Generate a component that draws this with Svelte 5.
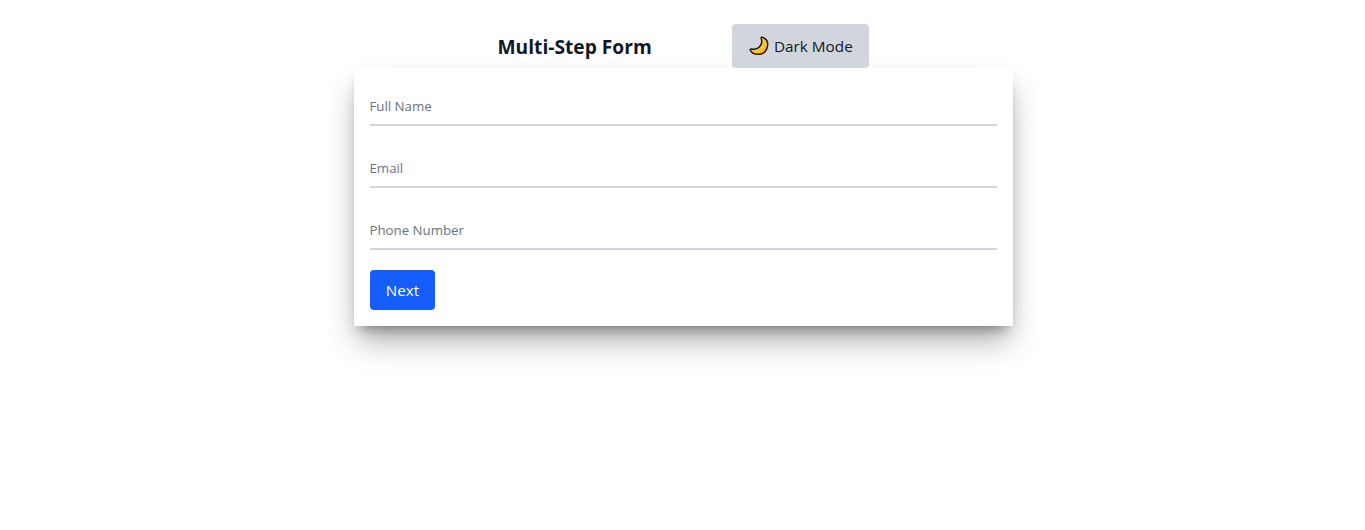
<script>
  const fields = [
    { name: 'name', label: 'Full Name', type: 'text' },
    { name: 'email', label: 'Email', type: 'email' },
    { name: 'phone', label: 'Phone Number', type: 'tel' }
  ];
</script>

<main>
  <header>
    <h1>Multi-Step Form</h1>
    <button class="mode" type="button">
      <svg width="20" height="20" viewBox="0 0 20 20" aria-hidden="true">
        <path d="M13.1 1.2C16.7 2.2 18.8 5.1 18.7 8.8C18.6 14.5 14.6 18.3 9.4 18.3C5.8 18.3 2.6 16.9 1.3 14.2C1 13.3 1.5 12.8 2.5 13C6.3 13.8 9.9 12.1 11.7 9.2C13 7 13.1 4.7 12.2 2.4C11.9 1.5 12.3 1.1 13.1 1.2Z" fill="#ffc431" stroke="#17130f" stroke-width="1.4" stroke-linejoin="round" />
        <path d="M17.5 8.8C17.2 13.3 13.9 16.8 9.4 17.2C12.8 15.7 15.6 13 17.5 8.8Z" fill="#f2a52b" />
      </svg>
      <span>Dark Mode</span>
    </button>
  </header>
  <form>
    {#each fields as field}
      <input name={field.name} type={field.type} placeholder={field.label} aria-label={field.label} />
    {/each}
    <button class="next" type="button">Next</button>
  </form>
</main>

<style>
  :global(body) {
    background: #fff;
  }
  main {
    box-sizing: border-box;
    width: 659px;
    min-height: 530px;
    margin-left: 354px;
    padding-top: 24px;
    font-family: "Segoe UI", "Open Sans", "Noto Sans", sans-serif;
    color: #101828;
  }
  button, input {
    font-family: inherit;
    box-sizing: border-box;
  }
  header {
    display: flex;
    justify-content: center;
    align-items: center;
    gap: 80px;
  }
  h1 {
    width: 154px;
    margin: 0;
    padding-top: 2px;
    font-size: 19.2px;
    line-height: 28px;
    font-weight: 700;
    white-space: nowrap;
    text-indent: -0.5px;
  }
  .mode {
    display: flex;
    align-items: center;
    gap: 5px;
    width: 137px;
    height: 44px;
    padding: 0 0 0 17px;
    border: 0;
    border-radius: 4px;
    background: #d1d5dc;
    color: #101828;
    font-size: 15.3px;
    line-height: 24px;
    white-space: nowrap;
  }
  svg {
    flex: none;
  }
  form {
    display: flex;
    flex-direction: column;
    align-items: flex-start;
    gap: 20px;
    box-sizing: border-box;
    height: 258px;
    padding: 16px;
    background: #fff;
    box-shadow: 0 18px 30px -4px rgba(0, 0, 0, 0.32), 0 9px 12px -6px rgba(0, 0, 0, 0.34);
  }
  input {
    width: 100%;
    height: 42px;
    padding: 12px 0 8px;
    border: 0;
    border-bottom: 2px solid #d1d5dc;
    background: transparent;
    font-size: 13.3px;
    line-height: 20px;
    text-indent: -0.5px;
    letter-spacing: -0.03px;
    outline: none;
  }
  input::placeholder {
    color: #6a7282;
    opacity: 1;
  }
  .next {
    width: 65px;
    height: 40px;
    padding: 0;
    border: 0;
    border-radius: 4px;
    background: #155dfc;
    color: #fff;
    font-size: 15.2px;
    line-height: 24px;
  }
</style>
